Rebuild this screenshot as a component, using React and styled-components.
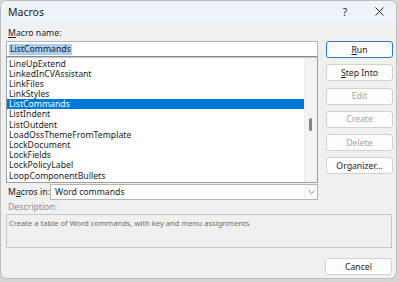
import React from "react";
import styled, { createGlobalStyle } from "styled-components";

const Global = createGlobalStyle`
  html, body {
    margin: 0;
    padding: 0;
    background: #d6d6d6;
    width: 399px;
    height: 282px;
    overflow: hidden;
  }
  * { box-sizing: border-box; }
`;

const macros = [
  "LineUpExtend",
  "LinkedInCVAssistant",
  "LinkFiles",
  "LinkStyles",
  "ListCommands",
  "ListIndent",
  "ListOutdent",
  "LoadOssThemeFromTemplate",
  "LockDocument",
  "LockFields",
  "LockPolicyLabel",
  "LoopComponentBullets",
];

const Window = styled.div`
  width: 397px;
  height: 279px;
  background: #f0f0f0;
  border: 1px solid #bdbdbd;
  border-radius: 7px;
  overflow: hidden;
  display: flex;
  flex-direction: column;
  font-family: "Noto Sans", "Open Sans", sans-serif;
  font-size: 8.7px;
  color: #1b1b1b;
`;

const TitleBar = styled.div`
  height: 21px;
  background: #eef3f9;
  display: flex;
  align-items: center;
  padding-left: 7px;
  font-size: 10.5px;
`;

const Title = styled.span`
  flex: 1;
`;

const TitleButton = styled.div`
  width: 34px;
  height: 21px;
  display: flex;
  align-items: center;
  justify-content: center;
  font-size: 10px;
  color: #222;
`;

const Body = styled.div`
  flex: 1;
  padding: 6px 3px 0 5px;
  display: flex;
  flex-direction: column;
`;

const Top = styled.div`
  display: flex;
  gap: 8px;
`;

const Left = styled.div`
  width: 312px;
  display: flex;
  flex-direction: column;
`;

const Label = styled.div`
  height: 11px;
  line-height: 11px;
  padding-left: 2px;
  color: ${(p) => (p.$disabled ? "#8d8d8d" : "#1b1b1b")};
  u { text-decoration: underline; }
`;

const TextBox = styled.div`
  margin-top: 2px;
  height: 16px;
  background: #fff;
  border: 1px solid #b4b4b4;
  border-bottom-color: #8a8a8a;
  padding-left: 2px;
  display: flex;
  align-items: center;
`;

const Selected = styled.span`
  background: #a8cdf0;
  line-height: 11px;
  padding: 0 1px;
`;

const List = styled.div`
  height: 126px;
  background: #fff;
  border: 1px solid #9c9c9c;
  border-top-color: #c8c8c8;
  display: flex;
`;

const Items = styled.div`
  flex: 1;
  padding-top: 0.5px;
`;

const Item = styled.div`
  height: 10.2px;
  line-height: 10.2px;
  padding-left: 2px;
  background: ${(p) => (p.$active ? "#0078d7" : "transparent")};
  color: ${(p) => (p.$active ? "#fff" : "#1b1b1b")};
`;

const ScrollTrack = styled.div`
  width: 13px;
  background: #f3f3f3;
  border-left: 1px solid #ececec;
  position: relative;
`;

const Thumb = styled.div`
  position: absolute;
  left: 4px;
  top: 60px;
  width: 3px;
  height: 13px;
  border-radius: 2px;
  background: #858585;
`;

const MacrosIn = styled.div`
  margin-top: 1px;
  display: flex;
  align-items: center;
`;

const InLabel = styled(Label)`
  width: 44px;
`;

const Select = styled.div`
  flex: 1;
  height: 16px;
  background: #fff;
  border: 1px solid #b4b4b4;
  display: flex;
  align-items: center;
  padding-left: 4px;
`;

const SelectText = styled.span`
  flex: 1;
`;

const Chevron = styled.div`
  width: 12px;
  height: 14px;
  display: flex;
  align-items: center;
  justify-content: center;
  border-left: 1px solid #f0f0f0;
`;

const Buttons = styled.div`
  width: 67px;
  padding-top: 13px;
  display: flex;
  flex-direction: column;
  gap: 6.3px;
`;

const Button = styled.div`
  height: 17px;
  background: #fdfdfd;
  border: 1px solid ${(p) => (p.$primary ? "#2a79c7" : "#d2d2d2")};
  border-radius: 3px;
  display: flex;
  align-items: center;
  justify-content: center;
  color: ${(p) => (p.$disabled ? "#a3a3a3" : "#1b1b1b")};
  u { text-decoration: underline; }
`;

const DescLabel = styled(Label)`
  margin-top: 2px;
`;

const Description = styled.div`
  margin-top: 1px;
  margin-right: 1px;
  height: 34px;
  border: 1px solid #c6c6c6;
  background: #f0f0f0;
  color: #6e6e6e;
  padding: 3px 2px;
  line-height: 11px;
  font-size: 7.6px;
`;

const Footer = styled.div`
  margin-top: 10px;
  display: flex;
  justify-content: flex-end;
  padding-right: 1px;
`;

const CancelButton = styled(Button)`
  width: 67px;
`;

export default function App() {
  return (
    <>
      <Global />
      <Window>
        <TitleBar>
          <Title>Macros</Title>
          <TitleButton>?</TitleButton>
          <TitleButton>
            <svg width="9" height="9" viewBox="0 0 9 9">
              <path d="M0.5 0.5 L8.5 8.5 M8.5 0.5 L0.5 8.5" stroke="#222" strokeWidth="1" fill="none" />
            </svg>
          </TitleButton>
        </TitleBar>
        <Body>
          <Top>
            <Left>
              <Label>
                <u>M</u>acro name:
              </Label>
              <TextBox>
                <Selected>ListCommands</Selected>
              </TextBox>
              <List>
                <Items>
                  {macros.map((m) => (
                    <Item key={m} $active={m === "ListCommands"}>
                      {m}
                    </Item>
                  ))}
                </Items>
                <ScrollTrack>
                  <Thumb />
                </ScrollTrack>
              </List>
              <MacrosIn>
                <InLabel>
                  M<u>a</u>cros in:
                </InLabel>
                <Select>
                  <SelectText>Word commands</SelectText>
                  <Chevron>
                    <svg width="7" height="4" viewBox="0 0 7 4">
                      <path d="M0.5 0.5 L3.5 3.5 L6.5 0.5" stroke="#777" strokeWidth="0.9" fill="none" />
                    </svg>
                  </Chevron>
                </Select>
              </MacrosIn>
            </Left>
            <Buttons>
              <Button $primary>
                <u>R</u>un
              </Button>
              <Button>
                <u>S</u>tep Into
              </Button>
              <Button $disabled>Edit</Button>
              <Button $disabled>Create</Button>
              <Button $disabled>Delete</Button>
              <Button>Organizer...</Button>
            </Buttons>
          </Top>
          <DescLabel $disabled>Description:</DescLabel>
          <Description>
            Create a table of Word commands, with key and menu assignments
          </Description>
          <Footer>
            <CancelButton>Cancel</CancelButton>
          </Footer>
        </Body>
      </Window>
    </>
  );
}
